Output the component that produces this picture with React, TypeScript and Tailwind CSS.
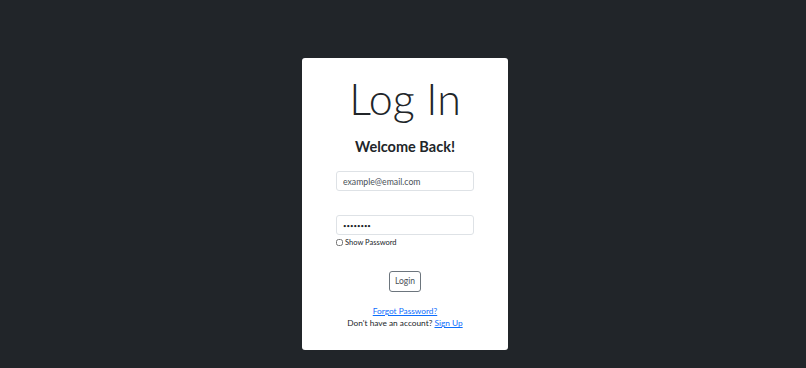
import { useState } from 'react'

export default function App() {
  const [show, setShow] = useState(false)

  return (
    <div className="flex h-[368px] w-full items-start justify-center bg-[#212529] pt-[58px] font-['Lato',sans-serif]">
      <div className="ml-[4px] flex h-[292px] w-[206px] flex-col items-center rounded-[3px] bg-white pt-[12px]">
        <h1 className="text-[43px] font-light leading-[58px] text-[#212529]">Log In</h1>
        <h2 className="mt-[10px] text-[14.5px] font-bold leading-[18px] text-[#212529]">Welcome Back!</h2>

        <input
          type="email"
          placeholder="example@email.com"
          className="mt-[15px] h-[20px] w-[138px] rounded-[3px] border border-[#dee2e6] px-[6px] text-[8.7px] text-[#212529] placeholder:text-[#495057] outline-none"
        />

        <div className="mt-[24px] flex w-[138px] flex-col">
          <input
            type={show ? 'text' : 'password'}
            defaultValue="password"
            className="h-[20px] w-full rounded-[3px] border border-[#dee2e6] px-[6px] text-[6px] text-[#212529] outline-none"
          />
          <label className="mt-[3px] flex items-center gap-[2px] text-[7.5px] leading-[9px] text-[#212529]">
            <input
              type="checkbox"
              checked={show}
              onChange={() => setShow(!show)}
              className="h-[7px] w-[7px]"
            />
            Show Password
          </label>
        </div>

        <button className="mt-[24px] h-[21px] rounded-[3px] border border-[#6c757d] px-[5px] text-[8.5px] text-[#495057]">
          Login
        </button>

        <a href="#" className="mt-[13px] text-[8.3px] leading-[12px] text-[#0d6efd] underline">
          Forgot Password?
        </a>
        <p className="text-[8.3px] leading-[12px] text-[#212529]">
          Don't have an account?{' '}
          <a href="#" className="text-[#0d6efd] underline">
            Sign Up
          </a>
        </p>
      </div>
    </div>
  )
}
